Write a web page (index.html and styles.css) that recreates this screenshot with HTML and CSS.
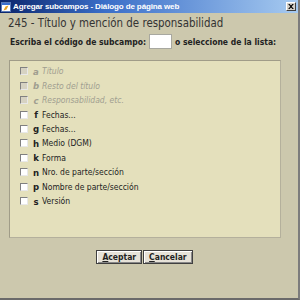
FILE: index.html
```html
<!DOCTYPE html>
<html lang="es">
<head>
    <meta charset="UTF-8">
    <title>Agregar subcampos</title>
    <link rel="stylesheet" href="styles.css">
</head>
<body>
    <div class="window">
        <div class="titlebar">
            <svg class="app-icon" width="10" height="10" viewBox="0 0 10 10">
                <rect x="0.5" y="0.5" width="9" height="9" fill="#fff" stroke="#5a7ab8"/>
                <rect x="1" y="1" width="8" height="2" fill="#3a6fd0"/>
                <path d="M2.5 8.5 L4.5 4.5 L7.5 3.5 L5.5 7.5 Z" fill="#e8a020"/>
            </svg>
            <span class="title-text">Agregar subcampos - Diálogo de página web</span>
            <button class="close-btn" type="button">
                <svg width="6" height="5" viewBox="0 0 8 7">
                    <path d="M0 0 L2 0 L4 2 L6 0 L8 0 L5 3.5 L8 7 L6 7 L4 5 L2 7 L0 7 L3 3.5 Z" fill="#000"/>
                </svg>
            </button>
        </div>
        <div class="content">
            <h1>245 - Título y mención de responsabilidad</h1>
            <div class="code-row">
                <span>Escriba el código de subcampo:</span>
                <input type="text" class="code-input">
                <span>o seleccione de la lista:</span>
            </div>
            <div class="panel">
                <label class="item disabled"><span class="box"></span><b>a</b><i>Título</i></label>
                <label class="item disabled"><span class="box"></span><b>b</b><i>Resto del título</i></label>
                <label class="item disabled"><span class="box"></span><b>c</b><i>Responsabilidad, etc.</i></label>
                <label class="item"><span class="box"></span><b>f</b>Fechas...</label>
                <label class="item"><span class="box"></span><b>g</b>Fechas...</label>
                <label class="item"><span class="box"></span><b>h</b>Medio (DGM)</label>
                <label class="item"><span class="box"></span><b>k</b>Forma</label>
                <label class="item"><span class="box"></span><b>n</b>Nro. de parte/sección</label>
                <label class="item"><span class="box"></span><b>p</b>Nombre de parte/sección</label>
                <label class="item"><span class="box"></span><b>s</b>Versión</label>
            </div>
            <div class="buttons">
                <button type="button"><u>A</u>ceptar</button>
                <button type="button"><u>C</u>ancelar</button>
            </div>
        </div>
    </div>
</body>
</html>
```

FILE: styles.css
```css
html, body {
    margin: 0;
    padding: 0;
}
body {
    width: 300px;
    height: 300px;
    background: #ccc8ad;
    font-family: 'DejaVu Sans Condensed', 'DejaVu Sans', sans-serif;
    color: #222;
    overflow: hidden;
}
.window {
    box-sizing: border-box;
    width: 300px;
    height: 300px;
    border-right: 2px solid #7c7c7c;
    border-bottom: 2px solid #6a6a6a;
    display: flex;
    flex-direction: column;
}
.titlebar {
    height: 13px;
    display: flex;
    align-items: center;
    padding: 0 2px 0 1px;
    background: linear-gradient(90deg, #0a246a 0%, #3a6ec8 35%, #a6caf0 100%);
    color: #fff;
}
.app-icon {
    flex: none;
    margin-right: 2px;
}
.title-text {
    flex: 1;
    font-family: 'Liberation Sans', Arial, sans-serif;
    font-weight: bold;
    font-size: 8px;
    letter-spacing: -0.12px;
    white-space: nowrap;
}
.close-btn {
    width: 10px;
    height: 9px;
    padding: 0;
    margin: 0;
    display: flex;
    align-items: center;
    justify-content: center;
    background: #d4d0c8;
    border: 1px solid;
    border-color: #fff #404040 #404040 #fff;
}
.content {
    flex: 1;
    padding: 2px 17px 0 8px;
    display: flex;
    flex-direction: column;
}
h1 {
    margin: 0;
    font-weight: normal;
    font-size: 11.4px;
    color: #333;
    height: 16px;
    line-height: 16px;
    white-space: nowrap;
}
.code-row {
    display: flex;
    align-items: center;
    gap: 3px;
    margin-top: 3px;
    padding-left: 2px;
    font-weight: bold;
    font-size: 8.5px;
    white-space: nowrap;
}
.code-input {
    width: 23px;
    height: 15px;
    box-sizing: border-box;
    padding: 0;
    border: 1px solid #a8a8a0;
    background: #fff;
}
.panel {
    margin: 11px 0 0 1px;
    height: 178px;
    box-sizing: border-box;
    background: #e4e0bc;
    border: 1px solid;
    border-color: #a09c88 #b4b09c #b4b09c #a09c88;
    padding: 3px 0 0 10px;
    display: flex;
    flex-direction: column;
}
.item {
    display: flex;
    align-items: center;
    height: 14.45px;
    font-size: 8.5px;
    color: #222;
}
.box {
    width: 6px;
    height: 6px;
    background: #fff;
    border: 1px solid;
    border-color: #808080 #e8e8e8 #e8e8e8 #808080;
    margin-right: 3px;
}
.item b {
    width: 10px;
    text-align: center;
    font-size: 9.5px;
    margin-right: 1px;
}
.item.disabled {
    color: #a09e90;
}
.item.disabled b {
    font-style: italic;
}
.item.disabled .box {
    background: #d6d2c2;
}
.buttons {
    display: flex;
    justify-content: center;
    gap: 1px;
    margin-top: 12px;
}
.buttons button {
    height: 14px;
    padding: 0 5px;
    font-family: 'DejaVu Sans Condensed', 'DejaVu Sans', sans-serif;
    font-weight: bold;
    font-size: 8.5px;
    color: #222;
    background: #e6e2d8;
    border: 1px solid #404040;
    box-shadow: inset 1px 1px 0 #fff, inset -1px -1px 0 #888;
}
```
